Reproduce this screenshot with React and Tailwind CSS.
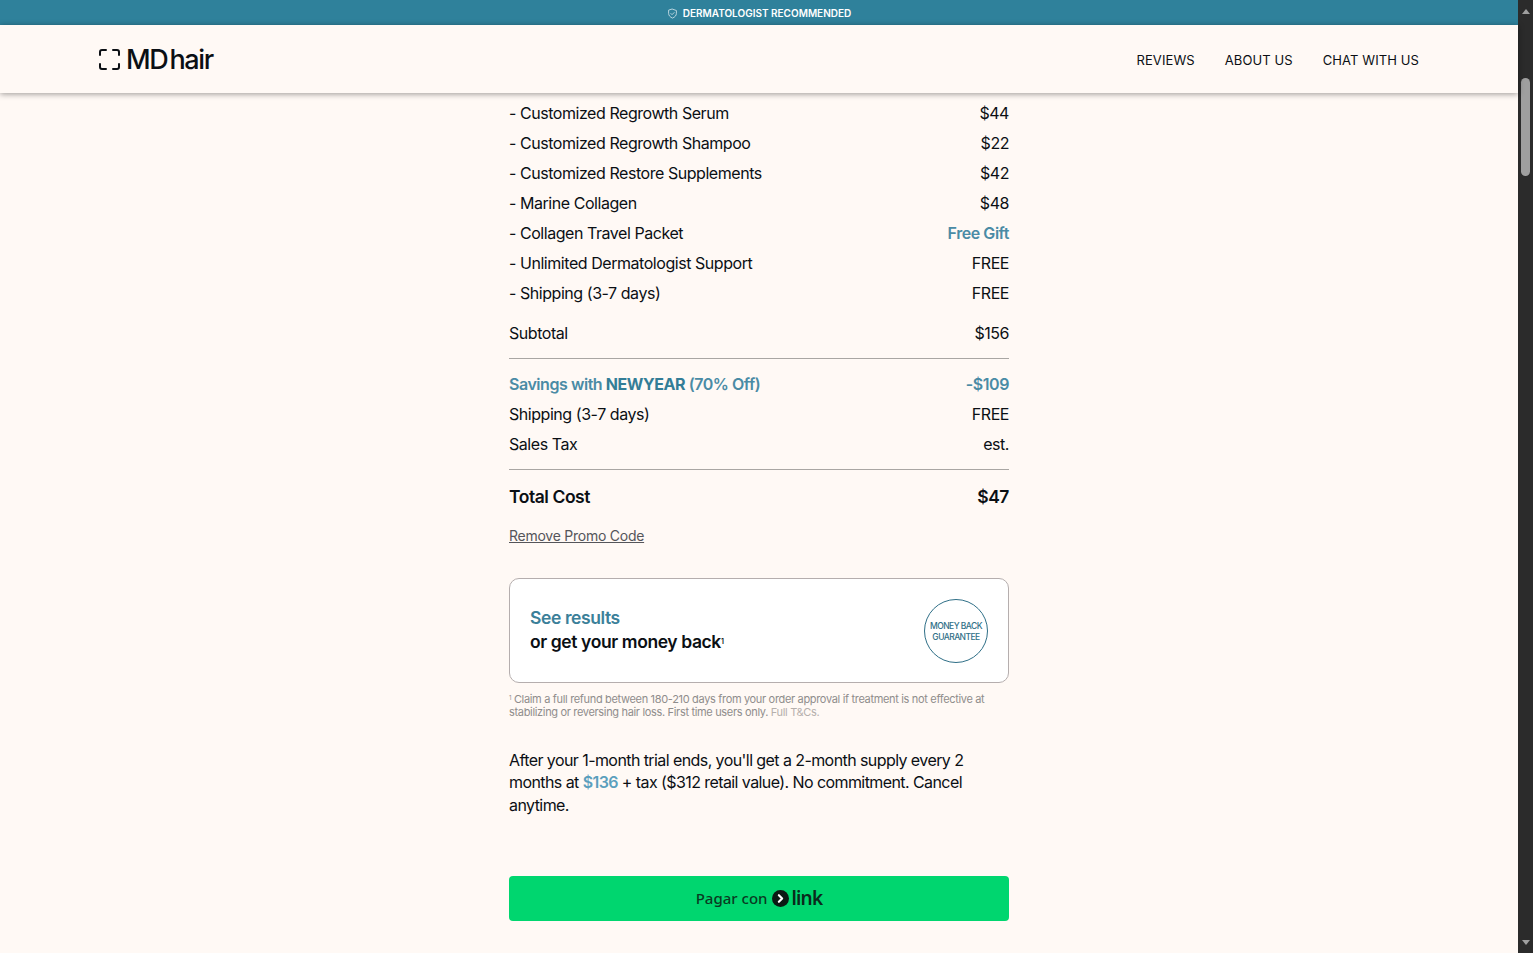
import { ChevronRight } from "lucide-react";

const items = [
  ["- Customized Regrowth Serum", "$44"],
  ["- Customized Regrowth Shampoo", "$22"],
  ["- Customized Restore Supplements", "$42"],
  ["- Marine Collagen", "$48"],
  ["- Collagen Travel Packet", "Free Gift", true],
  ["- Unlimited Dermatologist Support", "FREE"],
  ["- Shipping (3-7 days)", "FREE"],
];

function Row({ label, value, accent }) {
  return (
    <div className="flex h-[30px] items-center justify-between">
      <span>{label}</span>
      <span className={accent ? "font-semibold text-[#4a8ba5]" : ""}>{value}</span>
    </div>
  );
}

function ShieldIcon() {
  return (
    <svg width="11" height="11" viewBox="0 0 24 24" fill="none" stroke="#c4dce5" strokeWidth="2" strokeLinecap="round" strokeLinejoin="round">
      <path d="M12 2.5l8.5 3v6c0 5-3.5 8.500-8.500 10.500C7 20 3.500 16.500 3.500 11.500v-6z" />
      <path d="M8.500 12l2.500 2.500 4.500-4.500" />
    </svg>
  );
}

function LogoMark() {
  return (
    <svg width="21" height="21" viewBox="0 0 21 21" fill="none" stroke="#0b0f14" strokeWidth="2" strokeLinecap="round">
      <path d="M7 1H3a2 2 0 0 0-2 2v3" />
      <path d="M14 1h4a2 2 0 0 1 2 2v3" />
      <path d="M7 20H3a2 2 0 0 1-2-2v-3" />
      <path d="M14 20h4a2 2 0 0 0 2-2v-3" />
    </svg>
  );
}

export default function App() {
  return (
    <div className="flex h-[953px] w-full overflow-hidden bg-[#fff9f5] font-['Inter',sans-serif] text-[#0b0f14]">
      <div className="flex min-w-0 flex-1 flex-col">
        <div className="flex h-[25px] items-center justify-center gap-[5px] bg-[#2f819b] pt-[2px] text-[10px] font-semibold tracking-[0px] text-white">
          <ShieldIcon />
          DERMATOLOGIST RECOMMENDED
        </div>

        <header className="z-10 flex h-[68px] items-center justify-between bg-[#fff9f5] px-[99px] shadow-[0_1px_6px_rgba(0,0,0,0.4)]">
          <div className="flex items-center gap-[6px]">
            <LogoMark />
            <span className="text-[27px] font-medium leading-none tracking-[-1.35px]">
              MD<span className="ml-[2px]">hair</span>
            </span>
          </div>
          <nav className="flex gap-[30px] pt-[3px] text-[13px] tracking-[0.1px]">
            <span>REVIEWS</span>
            <span>ABOUT US</span>
            <span>CHAT WITH US</span>
          </nav>
        </header>

        <main className="mx-auto w-[500px] pt-[5px] text-[16px] tracking-[-0.45px]">
          {items.map(([label, value, accent]) => (
            <Row key={label} label={label} value={value} accent={accent} />
          ))}

          <div className="mt-[10px] border-b border-[#a9a6a3] pb-[10px]">
            <Row label="Subtotal" value="$156" />
          </div>

          <div className="border-b border-[#a9a6a3] py-[10px]">
            <div className="flex h-[30px] items-center justify-between font-semibold text-[#4a8ba5]">
              <span>
                Savings with <b className="font-bold text-[#337d97]">NEWYEAR</b> (70% Off)
              </span>
              <span>-$109</span>
            </div>
            <Row label="Shipping (3-7 days)" value="FREE" />
            <Row label="Sales Tax" value="est." />
          </div>

          <div className="mt-[12px] flex h-[30px] items-center justify-between text-[17.5px] font-semibold">
            <span>Total Cost</span>
            <span>$47</span>
          </div>

          <div className="mt-[14px] text-[14px] leading-[20px] tracking-[-0.25px] text-[#55555a] underline">Remove Promo Code</div>

          <div className="mt-[32px] flex h-[105px] items-center justify-between rounded-[10px] border border-[#b5aeae] bg-white px-[20px]">
            <div className="pb-[2px] text-[17.5px] font-semibold leading-[24px] tracking-[-0.4px]">
              <div className="text-[#3b8099]">See results</div>
              <div>
                or get your money back<sup className="text-[7px]">1</sup>
              </div>
            </div>
            <div className="flex size-[64px] flex-col items-center justify-center rounded-full border border-[#2f6f87] pt-[2px] text-center text-[8.5px] font-medium leading-[11px] tracking-[-0.55px] text-[#2f6f87]">
              <span>MONEY BACK</span>
              <span>GUARANTEE</span>
            </div>
          </div>

          <p className="mt-[10px] text-[11px] leading-[13px] tracking-[-0.33px] text-[#8f8d8c]">
            <sup className="text-[6px]">1</sup> Claim a full refund between 180-210 days from your order approval if treatment is not effective at stabilizing or reversing hair loss. First time users only. <span className="text-[#b5afac]">Full T&amp;Cs.</span>
          </p>

          <p className="mt-[30px] leading-[22.4px] tracking-[-0.58px]">
            After your 1-month trial ends, you'll get a 2-month supply every 2 months at <span className="font-semibold text-[#5b9fbd]">$136</span> + tax ($312 retail value). No commitment. Cancel anytime.
          </p>

          <button className="mt-[60px] flex h-[45px] w-full items-center justify-center rounded-[4px] bg-[#00d66f] font-['Noto_Sans',sans-serif] text-[#0a3a22]">
            <span className="text-[15px] font-medium tracking-normal">Pagar con</span>
            <span className="ml-[5px] flex size-[17px] items-center justify-center rounded-full bg-[#0b1a14]">
              <ChevronRight size={13} strokeWidth={4} color="#ffffff" />
            </span>
            <span className="ml-[2px] text-[19px] font-semibold leading-none tracking-[-0.8px] text-[#0b2a1c]">link</span>
          </button>
        </main>
      </div>

      <div className="flex w-[15px] shrink-0 flex-col items-center bg-[#2b2b2b]">
        <div className="mb-[64px] mt-[9px] size-0 border-x-[4px] border-b-[5px] border-x-transparent border-b-[#9f9f9f]" />
        <div className="h-[98px] w-[9px] rounded-[5px] bg-[#9f9f9f]" />
        <div className="mb-[8px] mt-auto size-0 border-x-[4px] border-t-[5px] border-x-transparent border-t-[#9f9f9f]" />
      </div>
    </div>
  );
}
